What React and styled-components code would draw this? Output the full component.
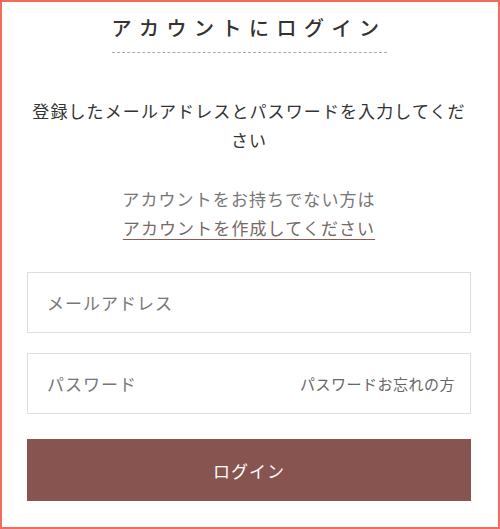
import React from 'react';
import styled, { createGlobalStyle } from 'styled-components';

const GlobalStyle = createGlobalStyle`
  * { box-sizing: border-box; }
  body {
    margin: 0;
    background: #fff;
    font-family: "Noto Sans CJK JP", "Noto Sans", sans-serif;
  }
`;

const Page = styled.div`
  width: 500px;
  height: 529px;
  border: 2px solid #f26b5c;
  padding: 0 27px 0 25px;
  display: flex;
  flex-direction: column;
  align-items: stretch;
  text-align: center;
`;

const TitleRow = styled.div`
  padding-top: 12px;
  display: flex;
  justify-content: center;
`;

const Title = styled.h1`
  margin: 0;
  font-size: 20px;
  line-height: 28px;
  font-weight: 500;
  letter-spacing: 7.5px;
  color: #333;
  padding-bottom: 10px;
  border-bottom: 1px dashed #b8a898;
`;

const Text = styled.p`
  margin: ${p => p.$top}px 0 0;
  font-size: 17px;
  letter-spacing: 1.1px;
  line-height: 29px;
  color: ${p => p.$muted ? '#767676' : '#333'};
`;

const Link = styled.a`
  color: #776866;
  text-decoration: underline;
  text-decoration-color: #8b5a55;
  text-underline-offset: 4px;
  text-decoration-thickness: 1px;
  cursor: pointer;
`;

const Form = styled.form`
  margin-top: 30px;
  display: flex;
  flex-direction: column;
  gap: 20px;
`;

const Field = styled.div`
  height: 61px;
  border: 1px solid #dedede;
  display: flex;
  align-items: center;
  padding: 0 15px 0 19px;
`;

const Input = styled.input`
  flex: 1;
  min-width: 0;
  border: none;
  outline: none;
  background: transparent;
  font-family: inherit;
  font-size: 17px;
  letter-spacing: 1px;
  color: #333;
  padding: 0;
  &::placeholder { color: #777; }
`;

const Forgot = styled.a`
  font-size: 15px;
  letter-spacing: 0.5px;
  color: #666;
  white-space: nowrap;
  cursor: pointer;
`;

const Button = styled.button`
  margin-top: 5px;
  height: 62px;
  border: none;
  background: #875450;
  color: #fff;
  font-family: inherit;
  font-size: 17px;
  letter-spacing: 1px;
  cursor: pointer;
`;

const App = () => {
  return (
    <>
      <GlobalStyle />
      <Page>
        <TitleRow>
          <Title>アカウントにログイン</Title>
        </TitleRow>
        <Text $top={43}>登録したメールアドレスとパスワードを入力してください</Text>
        <Text $top={30} $muted>
          アカウントをお持ちでない方は<br />
          <Link>アカウントを作成してください</Link>
        </Text>
        <Form onSubmit={e => e.preventDefault()}>
          <Field>
            <Input type="email" placeholder="メールアドレス" />
          </Field>
          <Field>
            <Input type="password" placeholder="パスワード" />
            <Forgot>パスワードお忘れの方</Forgot>
          </Field>
          <Button type="submit">ログイン</Button>
        </Form>
      </Page>
    </>
  );
};

export default App;
